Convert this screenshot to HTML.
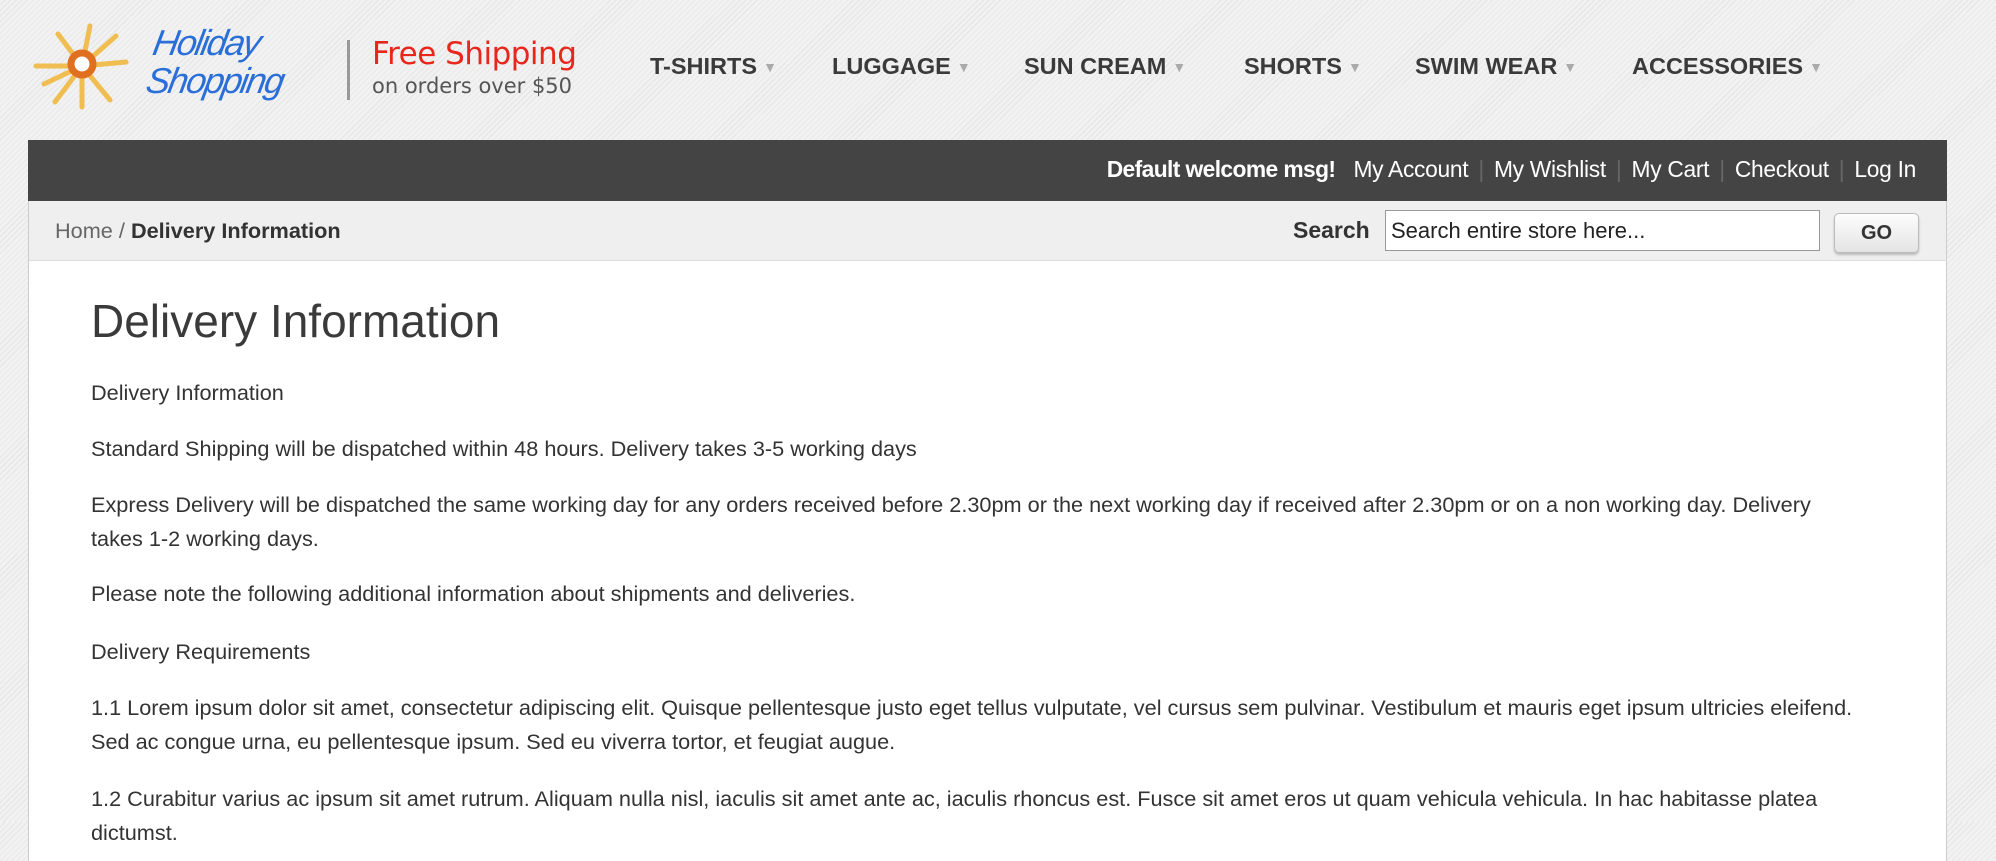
<!DOCTYPE html>
<html><head><meta charset="utf-8"><style>
*{margin:0;padding:0;box-sizing:border-box}
body{width:1996px;height:822px;overflow:hidden;font-family:"Liberation Sans",Arial,sans-serif;color:#333;
background:#eeeeee repeating-linear-gradient(135deg,#f2f2f2 0 3px,#e6e6e6 3px 4px)}
.abs{position:absolute}
.nav{position:absolute;top:53px;font-weight:bold;font-size:23.5px;color:#3a3a3a;white-space:nowrap}
.nav span{color:#aaa;font-size:14px;margin-left:6px;vertical-align:2px}
.bar{position:absolute;left:28px;width:1919px;top:140px;height:61px;background:#444}
.links{position:absolute;right:31px;top:16px;font-size:22.8px;color:#fff;white-space:nowrap;letter-spacing:-0.3px}
.links i{font-style:normal;color:#666;margin:0 10px}
.crumb{position:absolute;left:28px;width:1919px;top:201px;height:60px;background:#efefef;border:1px solid #ccc;border-top:none;border-bottom:1px solid #ddd}
.main{position:absolute;left:28px;width:1919px;top:261px;height:600px;background:#fff;border-left:1px solid #ccc;border-right:1px solid #ccc}
.main h1{position:absolute;left:62px;top:33px;font-weight:normal;font-size:46px;color:#3a3a3a}
.main .t{position:absolute;left:62px;font-size:21.7px;line-height:34px;color:#333;width:1774px}
</style></head><body>
<svg class="abs" style="left:30px;top:22px" width="100" height="88" viewBox="0 0 100 88">
<g stroke="#f0be50" stroke-width="5" stroke-linecap="round">
<line x1="52" y1="44" x2="6" y2="44"/><line x1="52" y1="44" x2="96" y2="40"/>
<line x1="52" y1="44" x2="60" y2="4"/><line x1="52" y1="44" x2="28" y2="12"/>
<line x1="52" y1="44" x2="86" y2="14"/><line x1="52" y1="44" x2="25" y2="80"/>
<line x1="52" y1="44" x2="52" y2="85"/><line x1="52" y1="44" x2="80" y2="78"/>
<line x1="52" y1="44" x2="14" y2="62"/></g>
<circle cx="52" cy="42" r="11" fill="#fff" stroke="#e07020" stroke-width="7"/></svg>
<div class="abs" style="left:150px;top:24px;font-family:'Liberation Sans',sans-serif;font-style:italic;color:#2a6fd8;font-size:36px;line-height:38px;letter-spacing:-2px;transform:skew(-10deg)">Holiday<br>Shopping</div>
<div class="abs" style="left:347px;top:40px;width:3px;height:60px;background:#999"></div>
<div class="abs" style="left:372px;top:36px;color:#e8261c;font-size:31px;font-family:'DejaVu Sans',sans-serif;letter-spacing:-0.5px">Free Shipping</div>
<div class="abs" style="left:372px;top:74px;color:#555;font-size:21px;font-family:'DejaVu Sans',sans-serif">on orders over $50</div>
<div class="nav" style="left:650px">T-SHIRTS<span>▼</span></div>
<div class="nav" style="left:832px">LUGGAGE<span>▼</span></div>
<div class="nav" style="left:1024px">SUN CREAM<span>▼</span></div>
<div class="nav" style="left:1244px">SHORTS<span>▼</span></div>
<div class="nav" style="left:1415px">SWIM WEAR<span>▼</span></div>
<div class="nav" style="left:1632px">ACCESSORIES<span>▼</span></div>
<div class="bar"><div class="links"><b style="letter-spacing:-0.6px">Default welcome msg!</b>&nbsp;&nbsp;&nbsp;My Account<i>|</i>My Wishlist<i>|</i>My Cart<i>|</i>Checkout<i>|</i>Log In</div></div>
<div class="crumb">
<div class="abs" style="left:26px;top:17px;font-size:21.7px;color:#666">Home / <b style="color:#333">Delivery Information</b></div>
<div class="abs" style="left:1264px;top:16px;font-size:23px;font-weight:bold;color:#333">Search</div>
<div class="abs" style="left:1356px;top:9px;width:435px;height:41px;background:#fff;border:1px solid #999;font-size:22px;color:#222;padding:7px 5px;white-space:nowrap">Search entire store here...</div>
<div class="abs" style="left:1805px;top:12px;width:85px;height:40px;border:1px solid #bbb;border-radius:5px;background:linear-gradient(#fdfdfd,#e4e4e4);box-shadow:0 2px 2px #bbb;text-align:center;font-weight:bold;font-size:20px;line-height:38px;color:#333">GO</div>
</div>
<div class="main">
<h1>Delivery Information</h1>
<div class="t" style="top:115px">Delivery Information</div>
<div class="t" style="top:171px">Standard Shipping will be dispatched within 48 hours. Delivery takes 3-5 working days</div>
<div class="t" style="top:227px">Express Delivery will be dispatched the same working day for any orders received before 2.30pm or the next working day if received after 2.30pm or on a non working day. Delivery takes 1-2 working days.</div>
<div class="t" style="top:316px">Please note the following additional information about shipments and deliveries.</div>
<div class="t" style="top:374px">Delivery Requirements</div>
<div class="t" style="top:430px">1.1 Lorem ipsum dolor sit amet, consectetur adipiscing elit. Quisque pellentesque justo eget tellus vulputate, vel cursus sem pulvinar. Vestibulum et mauris eget ipsum ultricies eleifend. Sed ac congue urna, eu pellentesque ipsum. Sed eu viverra tortor, et feugiat augue.</div>
<div class="t" style="top:521px">1.2 Curabitur varius ac ipsum sit amet rutrum. Aliquam nulla nisl, iaculis sit amet ante ac, iaculis rhoncus est. Fusce sit amet eros ut quam vehicula vehicula. In hac habitasse platea dictumst.</div>
</div>
</body></html>
